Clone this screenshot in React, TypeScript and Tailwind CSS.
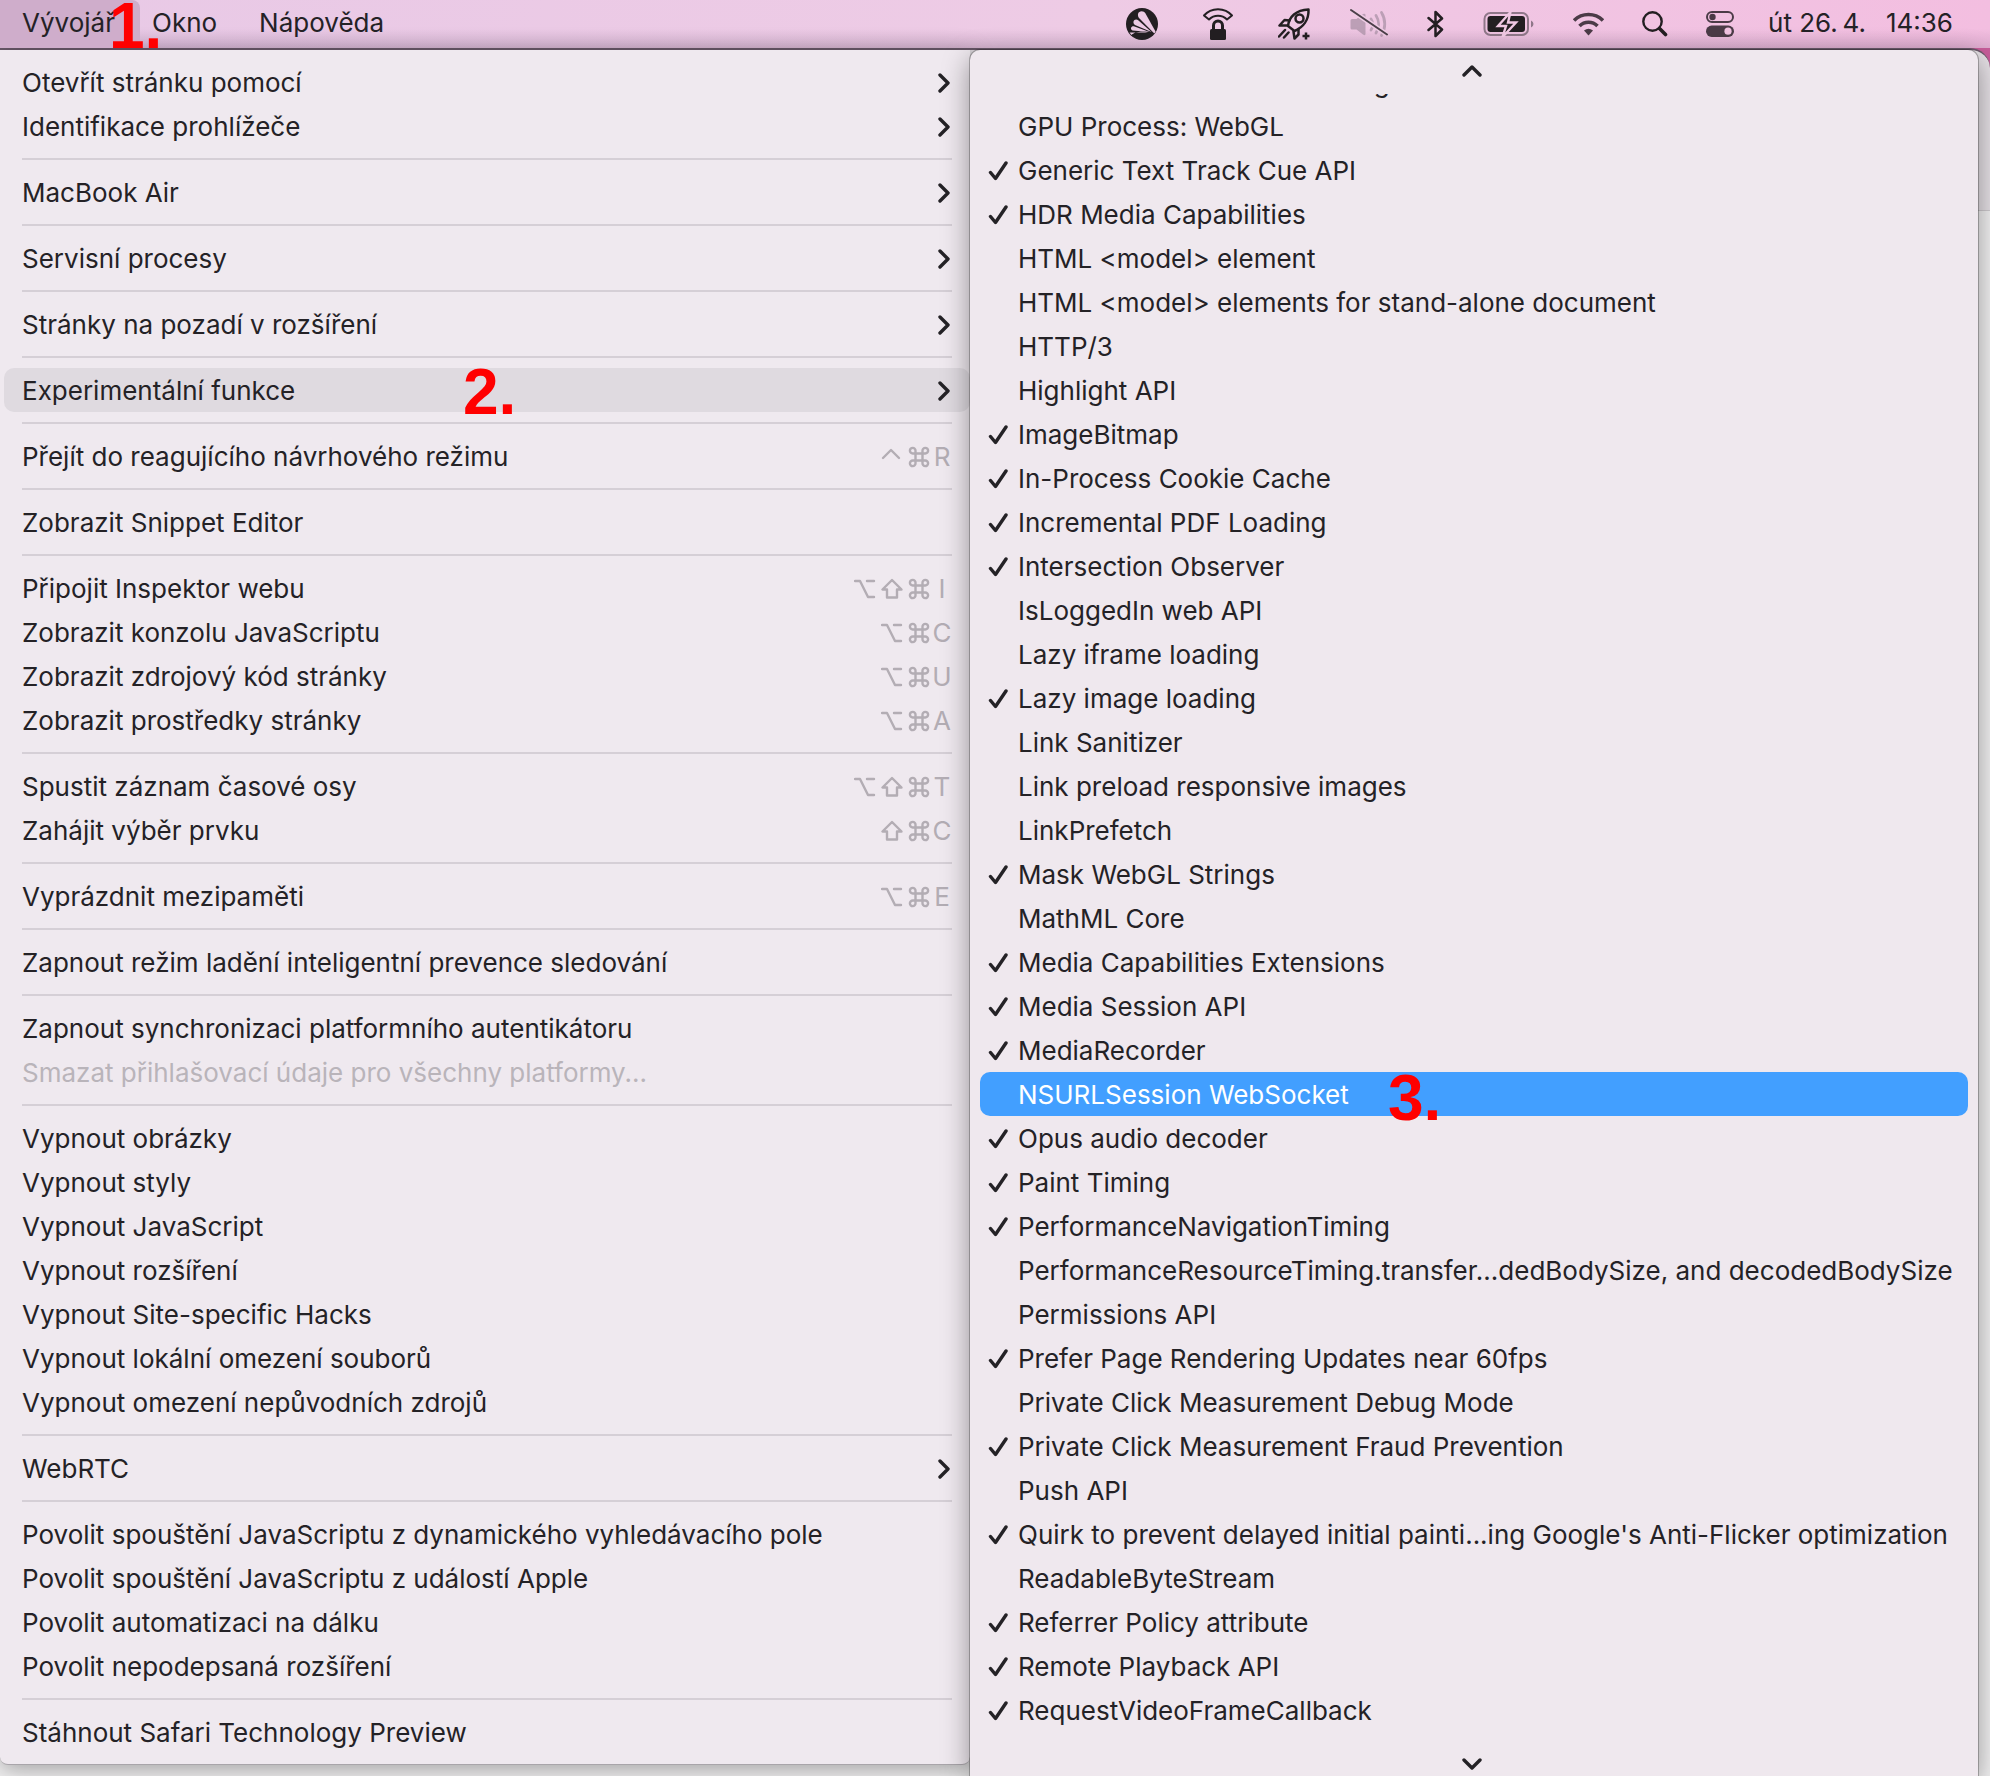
import { useState, type ReactNode } from 'react';

type DevItem = {
  label: string;
  submenu?: boolean;
  keys?: string;
  disabled?: boolean;
};

// Each group is followed by a separator line
const developGroups: DevItem[][] = [
  [
    { label: 'Otevřít stránku pomocí', submenu: true },
    { label: 'Identifikace prohlížeče', submenu: true },
  ],
  [{ label: 'MacBook Air', submenu: true }],
  [{ label: 'Servisní procesy', submenu: true }],
  [{ label: 'Stránky na pozadí v rozšíření', submenu: true }],
  [{ label: 'Experimentální funkce', submenu: true }],
  [{ label: 'Přejít do reagujícího návrhového režimu', keys: '⌃⌘R' }],
  [{ label: 'Zobrazit Snippet Editor' }],
  [
    { label: 'Připojit Inspektor webu', keys: '⌥⇧⌘I' },
    { label: 'Zobrazit konzolu JavaScriptu', keys: '⌥⌘C' },
    { label: 'Zobrazit zdrojový kód stránky', keys: '⌥⌘U' },
    { label: 'Zobrazit prostředky stránky', keys: '⌥⌘A' },
  ],
  [
    { label: 'Spustit záznam časové osy', keys: '⌥⇧⌘T' },
    { label: 'Zahájit výběr prvku', keys: '⇧⌘C' },
  ],
  [{ label: 'Vyprázdnit mezipaměti', keys: '⌥⌘E' }],
  [{ label: 'Zapnout režim ladění inteligentní prevence sledování' }],
  [
    { label: 'Zapnout synchronizaci platformního autentikátoru' },
    { label: 'Smazat přihlašovací údaje pro všechny platformy...', disabled: true },
  ],
  [
    { label: 'Vypnout obrázky' },
    { label: 'Vypnout styly' },
    { label: 'Vypnout JavaScript' },
    { label: 'Vypnout rozšíření' },
    { label: 'Vypnout Site-specific Hacks' },
    { label: 'Vypnout lokální omezení souborů' },
    { label: 'Vypnout omezení nepůvodních zdrojů' },
  ],
  [{ label: 'WebRTC', submenu: true }],
  [
    { label: 'Povolit spouštění JavaScriptu z dynamického vyhledávacího pole' },
    { label: 'Povolit spouštění JavaScriptu z událostí Apple' },
    { label: 'Povolit automatizaci na dálku' },
    { label: 'Povolit nepodepsaná rozšíření' },
  ],
  [{ label: 'Stáhnout Safari Technology Preview' }],
];

const features = [
  { name: 'GPU Process: WebGL', on: false },
  { name: 'Generic Text Track Cue API', on: true },
  { name: 'HDR Media Capabilities', on: true },
  { name: 'HTML <model> element', on: false },
  { name: 'HTML <model> elements for stand-alone document', on: false },
  { name: 'HTTP/3', on: false },
  { name: 'Highlight API', on: false },
  { name: 'ImageBitmap', on: true },
  { name: 'In-Process Cookie Cache', on: true },
  { name: 'Incremental PDF Loading', on: true },
  { name: 'Intersection Observer', on: true },
  { name: 'IsLoggedIn web API', on: false },
  { name: 'Lazy iframe loading', on: false },
  { name: 'Lazy image loading', on: true },
  { name: 'Link Sanitizer', on: false },
  { name: 'Link preload responsive images', on: false },
  { name: 'LinkPrefetch', on: false },
  { name: 'Mask WebGL Strings', on: true },
  { name: 'MathML Core', on: false },
  { name: 'Media Capabilities Extensions', on: true },
  { name: 'Media Session API', on: true },
  { name: 'MediaRecorder', on: true },
  { name: 'NSURLSession WebSocket', on: false },
  { name: 'Opus audio decoder', on: true },
  { name: 'Paint Timing', on: true },
  { name: 'PerformanceNavigationTiming', on: true },
  { name: 'PerformanceResourceTiming.transfer...dedBodySize, and decodedBodySize', on: false },
  { name: 'Permissions API', on: false },
  { name: 'Prefer Page Rendering Updates near 60fps', on: true },
  { name: 'Private Click Measurement Debug Mode', on: false },
  { name: 'Private Click Measurement Fraud Prevention', on: true },
  { name: 'Push API', on: false },
  { name: "Quirk to prevent delayed initial painti...ing Google's Anti-Flicker optimization", on: true },
  { name: 'ReadableByteStream', on: false },
  { name: 'Referrer Policy attribute', on: true },
  { name: 'Remote Playback API', on: true },
  { name: 'RequestVideoFrameCallback', on: true },
];

function Chevron({ className }: { className?: string }) {
  return (
    <svg width="12" height="20" viewBox="0 0 12 20" fill="none" stroke="currentColor" strokeWidth="3.4" strokeLinecap="round" strokeLinejoin="round" className={className}>
      <path d="M2 2l8 8-8 8" />
    </svg>
  );
}

function Check() {
  return (
    <svg width="20" height="20" viewBox="0 0 20 20" fill="none" stroke="currentColor" strokeWidth="3.4" strokeLinecap="round" strokeLinejoin="round">
      <path d="M2.500 11.500l5 6L18 2" />
    </svg>
  );
}

const keyPaths: Record<string, string> = {
  '⌃': 'M2 12l8-8 8 8',
  '⌥': 'M1 3h5l8 16h6M13 3h7',
  '⇧': 'M11 2L1.500 11.500H6V19.500H16V11.500H20.500Z',
  '⌘': 'M7.500 7.500H14.500V14.500H7.500ZM7.500 7.500H4.800A2.800 2.800 0 1 1 7.500 4.800ZM14.500 7.500V4.800A2.800 2.800 0 1 1 17.200 7.500ZM14.500 14.500H17.200A2.800 2.800 0 1 1 14.500 17.200ZM7.500 14.500V17.200A2.800 2.800 0 1 1 4.800 14.500Z',
};

function Shortcut({ keys }: { keys: string }) {
  return (
    <span className="flex items-center text-[#b3adb4]">
      {[...keys].map((key) =>
        keyPaths[key] ? (
          <span key={key} className="flex w-[27px] justify-center">
            <svg width="22" height="22" viewBox="0 0 22 22" fill="none" stroke="currentColor" strokeWidth="2.4" strokeLinecap="round" strokeLinejoin="round">
              <path d={keyPaths[key]} />
            </svg>
          </span>
        ) : (
          <span key={key} className="w-5 text-center">{key}</span>
        )
      )}
    </span>
  );
}

function Marker({ className, children }: { className: string; children: ReactNode }) {
  return (
    <span className={`pointer-events-none absolute z-20 font-['Liberation_Sans',Arial,sans-serif] text-[64px] leading-none font-bold text-[#ff0000] ${className}`}>
      {children}
    </span>
  );
}

function StatusIcons() {
  return (
    <>
      {/* Avast */}
      <svg width="32" height="32" viewBox="0 0 32 32">
        <circle cx="16" cy="16" r="16" fill="#231f22" />
        <path d="M12 6C12.500 3 17.500 2 19.500 5.500L29.500 23.500C29 25 28.300 25.500 27.800 25L13 10C12 8.800 11.800 7.500 12 6Z" fill="#eccbe4" />
        <path d="M7.500 13.500C8 11 11 10.800 12.500 12.500L25.500 24L9 17C7.800 16.200 7.200 15 7.500 13.500ZM5 20C5.500 18.200 7.200 18 8.500 18.500L23.500 24L6.500 22.500C5.500 22 4.800 21 5 20ZM3.500 24.500L22 24.500C16 22.800 8 24 5.500 27Z" fill="#eccbe4" />
      </svg>
      {/* VPN lock */}
      <svg width="44" height="32" viewBox="0 0 44 32" fill="none" stroke="#231f22" strokeWidth="2">
        <path d="M8 7.500C15 -1 29 -1 36 7.500L31 11.500C26 6.500 18 6.500 13 11.500Z" strokeLinejoin="round" />
        <path d="M17.500 21V17.500a4.500 4.500 0 0 1 9 0V21" strokeWidth="3" />
        <rect x="14" y="21" width="16" height="11" rx="1.500" fill="#231f22" stroke="none" />
      </svg>
      {/* Rocket */}
      <svg width="34" height="32" viewBox="0 0 34 32" fill="none" stroke="#231f22" strokeWidth="2.500" strokeLinecap="round" strokeLinejoin="round">
        <path d="M10 18C11 9 18 2 30.500 1.500C31 12 25 19.500 16.500 23Z" />
        <circle cx="21.500" cy="10.500" r="4" />
        <path d="M11.500 12.500L6.500 12L1.500 17.500L9.500 17.500M15.500 23.500L16.500 30.500L20.500 26.500V21M7 22L1 28.500M10.500 24.500L6 29.500" />
        <path d="M28 24.500V31.500M24.500 28H31.500" strokeLinecap="butt" />
      </svg>
      {/* Muted sound */}
      <svg width="39" height="32" viewBox="0 0 39 32" fill="none" stroke="#bc9fb6" strokeWidth="2.800" strokeLinecap="round">
        <path d="M2 11H6.500L13 6Q15.500 5 15.500 7V26Q15.500 28 13 26.500L6.500 21.500H2Q0.500 21.500 0.500 20V12.500Q0.500 11 2 11Z" fill="#bc9fb6" stroke="none" />
        <path d="M21 11a10 10 0 0 1 0 11M26 7.500a16 16 0 0 1 0 17.500M31.500 4.500a22 22 0 0 1 0 23" />
        <path d="M1 2L37 26.500" stroke="#eecbe4" strokeWidth="5" strokeLinecap="butt" />
        <path d="M1 2L37 26.500" stroke="#4b3f49" strokeWidth="2" />
      </svg>
      {/* Bluetooth */}
      <svg width="18" height="28" viewBox="0 0 18 28" fill="none" stroke="#231f22" strokeWidth="2.500" strokeLinecap="round" strokeLinejoin="round">
        <path d="M1.500 8L15 19.500L8.500 26V2L15 8.500L1.500 20" />
      </svg>
      {/* Battery */}
      <svg width="52" height="26" viewBox="0 0 52 26">
        <rect x="1.500" y="2" width="43.500" height="22" rx="6" fill="none" stroke="#8f7789" strokeWidth="2" />
        <rect x="4.500" y="5" width="37.500" height="16" rx="3" fill="#231f22" />
        <path d="M48 9.500Q50.500 10.500 50.500 13T48 16.500Z" fill="#8f7789" />
        <path d="M27.500 1L15 15H23L19.500 26L33 11.500H25Z" fill="#231f22" stroke="#f0c8e3" strokeWidth="2.400" />
      </svg>
      {/* Wi-Fi */}
      <svg width="31" height="24" viewBox="0 0 31 24" fill="none" stroke="#4b3b47" strokeWidth="3.600">
        <path d="M1 8.500C9 0.500 22 0.500 30 8.500M6.500 14C11.500 9 19.500 9 24.500 14" />
        <path d="M15.500 23.500L11 18.500Q15.500 15 20 18.500Z" fill="#4b3b47" stroke="none" />
      </svg>
      {/* Search */}
      <svg width="26" height="26" viewBox="0 0 26 26" fill="none" stroke="#231f22" strokeLinecap="round">
        <circle cx="10.500" cy="10.500" r="9.200" strokeWidth="2.400" />
        <path d="M17.500 17.500L23.500 23.500" strokeWidth="3.600" />
      </svg>
      {/* Control centre */}
      <svg width="28" height="26" viewBox="0 0 28 26">
        <rect x="1" y="1" width="26" height="10" rx="5" fill="none" stroke="#4b3b47" strokeWidth="2" />
        <circle cx="6.500" cy="6" r="3.200" fill="#4b3b47" />
        <rect x="0" y="14.500" width="28" height="11.500" rx="5.700" fill="#4b3b47" />
        <circle cx="22" cy="20.200" r="3.600" fill="#f1c2e1" />
      </svg>
    </>
  );
}

function MenuBar() {
  return (
    <header className="flex h-12 items-stretch bg-[linear-gradient(to_bottom,transparent_60%,rgba(90,60,100,0.14)),linear-gradient(to_right,#e8c9e6,#eecbe5_55%,#f3bee0)]">
      <nav className="flex">
        <button className="relative w-[140px] rounded-r-lg bg-[#cfadcb] pb-0.5 pl-[22px] text-left">
          Vývojář
          <Marker className="-top-1.5 left-[109px]">1.</Marker>
        </button>
        <button className="pr-5 pb-0.5 pl-3">Okno</button>
        <button className="px-[22px] pb-0.5">Nápověda</button>
      </nav>
      <div className="ml-auto flex items-center pr-[37px]">
        <div className="flex items-center gap-[38px]">
          <StatusIcons />
        </div>
        <div className="ml-[34px] flex gap-5 pb-0.5 whitespace-nowrap">
          <span>út 26.&#8201;4.</span>
          <time>14:36</time>
        </div>
      </div>
    </header>
  );
}

function DevelopMenu() {
  return (
    <div role="menu" className="rounded-b-lg border-b border-[#a9a5aa] bg-[#efe9ef] py-[10px] shadow-[0_4px_24px_rgba(0,0,0,0.35)]">
      {developGroups.map((group, index) => (
        <div key={group[0].label}>
          {index > 0 && <hr className="mt-[10px] mr-[18px] mb-[10px] ml-[22px] border-t-2 border-[#d5cfd6]" />}
          {group.map((item) => {
            const open = item.label === 'Experimentální funkce';
            return (
              <button
                key={item.label}
                role="menuitem"
                disabled={item.disabled}
                className={`relative ml-1 flex h-11 w-[calc(100%-4px)] items-center justify-between rounded-[10px] px-[18px] pt-0.5 whitespace-nowrap ${
                  open ? 'bg-[#dfdae0]' : ''
                } ${item.disabled ? 'text-[#b9b4ba]' : ''}`}
              >
                {item.label}
                {item.submenu && <Chevron className="mr-0.5" />}
                {item.keys && <Shortcut keys={item.keys} />}
                {open && <Marker className="-top-2 left-[459px]">2.</Marker>}
              </button>
            );
          })}
        </div>
      ))}
    </div>
  );
}

function FeaturesMenu() {
  const [enabled, setEnabled] = useState(features.filter((f) => f.on).map((f) => f.name));

  const toggle = (name: string) => {
    setEnabled((prev) => (prev.includes(name) ? prev.filter((n) => n !== name) : [...prev, name]));
  };

  return (
    <div role="menu" className="relative z-10 rounded-t-[10px] bg-[#efe8ee] px-[10px] shadow-[0_0_0_1px_rgba(0,0,0,0.25),0_8px_28px_rgba(0,0,0,0.4)]">
      <div className="flex h-11 items-center justify-center pr-1 pb-0.5">
        <Chevron className="-rotate-90" />
      </div>
      {/* Row scrolled almost out of view */}
      <div className="flex h-[10px] items-end overflow-hidden">
        <div className="flex h-11 shrink-0 items-center pt-0.5 pl-[38px]">GPU Process: DOM Rendering</div>
      </div>
      {features.map(({ name }) => {
        const selected = name === 'NSURLSession WebSocket';
        return (
          <button
            key={name}
            role="menuitemcheckbox"
            aria-checked={enabled.includes(name)}
            onClick={() => toggle(name)}
            className={`relative flex h-11 w-full items-center rounded-[10px] pt-0.5 pl-2 text-left whitespace-nowrap ${
              selected ? 'bg-[#429fff] text-white' : ''
            }`}
          >
            <span className="w-[30px] shrink-0">{enabled.includes(name) && <Check />}</span>
            {name}
            {selected && <Marker className="-top-1.5 left-[408px]">3.</Marker>}
          </button>
        );
      })}
      <div className="flex h-11 items-center justify-center pt-5 pr-1">
        <Chevron className="rotate-90" />
      </div>
    </div>
  );
}

export default function App() {
  return (
    <div className="min-h-screen overflow-hidden bg-[#c75d9a] font-[Inter,sans-serif] text-[26px] leading-8 text-[#242226]">
      <MenuBar />
      <main className="grid grid-cols-[970fr_1008fr_12px] items-start rounded-tr-[20px] border-t-2 border-[#6b5a6b] bg-[linear-gradient(to_bottom,#e6e1e6_160px,#cfcbcf_160px,#cfcbcf_161px,#f2f1f2_161px)]">
        <DevelopMenu />
        <FeaturesMenu />
      </main>
    </div>
  );
}
